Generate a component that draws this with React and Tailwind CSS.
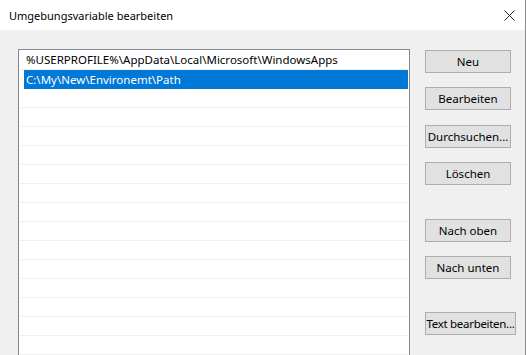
import React from "react";

const entries = [
  "%USERPROFILE%\\AppData\\Local\\Microsoft\\WindowsApps",
  "C:\\My\\New\\Environemt\\Path",
];

const buttons = [
  { label: "Neu", cls: "mt-[20px] w-[86px]" },
  { label: "Bearbeiten", cls: "mt-[14px] w-[86px]" },
  { label: "Durchsuchen...", cls: "mt-[15px] w-[86px]" },
  { label: "Löschen", cls: "mt-[14px] w-[86px]" },
  { label: "Nach oben", cls: "mt-[34px] w-[86px]" },
  { label: "Nach unten", cls: "mt-[14px] w-[86px]" },
  { label: "Text bearbeiten...", cls: "mt-[33px] w-[91px] tracking-[-0.3px]" },
];

export default function App() {
  const rows = Array.from({ length: 17 }, (_, i) => entries[i] || "");
  const selected = 1;

  return (
    <div
      className="w-[526px] h-[355px] overflow-hidden bg-[#f0f0f0] border-r border-[#8a8a8a] text-[11.5px] text-black flex flex-col"
      style={{ fontFamily: '"Noto Sans", "Open Sans", sans-serif' }}
    >
      {/* title bar */}
      <div className="h-[30px] shrink-0 bg-white flex items-center justify-between pl-[9px] pr-[10px]">
        <span className="leading-none text-[11px]">Umgebungsvariable bearbeiten</span>
        <svg width="11" height="11" viewBox="0 0 11 11" aria-hidden="true">
          <path d="M0.5 0.5L10.5 10.5M10.5 0.5L0.5 10.5" stroke="#222" strokeWidth="1" />
        </svg>
      </div>

      <div className="flex flex-1 min-h-0 pl-[18px]">
        <div className="mt-[19px] w-[392px] h-[400px] shrink-0 bg-white border border-[#828790] pt-[1px] pl-[1px] pr-[1px]">
          {rows.map((text, i) => (
            <div
              key={i}
              className={`h-[19px] flex items-center whitespace-nowrap leading-none ${
                i === selected
                  ? "ml-[4px] pl-[2px] bg-[#0078d7] text-white"
                  : "pl-[6px] border-b border-[#f0f0f0]"
              }`}
            >
              {text}
            </div>
          ))}
        </div>

        <div className="ml-[15px] flex flex-col items-start">
          {buttons.map((b) => (
            <button
              key={b.label}
              type="button"
              className={`${b.cls} h-[23px] bg-[#e1e1e1] border border-[#adadad] flex items-center justify-center leading-none whitespace-nowrap`}
            >
              {b.label}
            </button>
          ))}
        </div>
      </div>
    </div>
  );
}
